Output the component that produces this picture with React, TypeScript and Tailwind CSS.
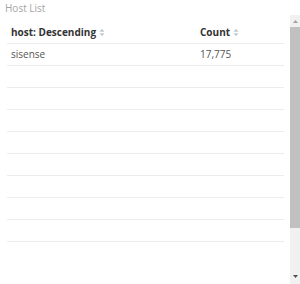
import React from "react";

const rows: { host: string; count: string }[] = [
  { host: "sisense", count: "17,775" },
  { host: "", count: "" },
  { host: "", count: "" },
  { host: "", count: "" },
  { host: "", count: "" },
  { host: "", count: "" },
  { host: "", count: "" },
  { host: "", count: "" },
  { host: "", count: "" },
];

function SortIcon() {
  return (
    <svg width="6" height="9" viewBox="0 0 6 9" className="ml-[3px] shrink-0">
      <path d="M0.5 3.8 L3 0.8 L5.5 3.8 Z" fill="#c3c7cc" />
      <path d="M0.5 5.2 L3 8.2 L5.5 5.2 Z" fill="#c3c7cc" />
    </svg>
  );
}

function Scrollbar() {
  return (
    <div className="w-[10px] h-full bg-[#f1f1f1] flex flex-col">
      <div className="h-[12px] flex items-center justify-center">
        <svg width="5" height="3" viewBox="0 0 5 3">
          <path d="M0 3 L2.5 0 L5 3 Z" fill="#a3a3a3" />
        </svg>
      </div>
      <div className="h-[201px] bg-[#c1c1c1]" />
      <div className="flex-1" />
      <div className="h-[12px] flex items-center justify-center mb-[2px]">
        <svg width="5" height="3" viewBox="0 0 5 3">
          <path d="M0 0 L2.5 3 L5 0 Z" fill="#505050" />
        </svg>
      </div>
    </div>
  );
}

export default function App() {
  return (
    <div
      className="w-[300px] h-[284px] bg-white flex flex-col overflow-hidden"
      style={{ fontFamily: '"Open Sans", "Liberation Sans", sans-serif' }}
    >
      <div className="h-[15px] pl-[5px] pt-[1px] text-[10px] leading-[14px] text-[#a5a5a5]">
        Host List
      </div>
      <div className="flex flex-1 min-h-0">
        <div className="flex-1 pl-[7px] pr-[6px] pt-[7px]">
          <div className="flex h-[22px] items-center border-b border-[#ececec] text-[10px] font-bold text-[#333]">
            <div className="w-[189px] pl-[4px] flex items-center">
              host: Descending
              <SortIcon />
            </div>
            <div className="flex-1 pl-[4px] flex items-center">
              Count
              <SortIcon />
            </div>
          </div>
          {rows.map((r, i) => (
            <div
              key={i}
              className="flex h-[22px] items-center border-b border-[#ececec] text-[10px] text-[#555]"
            >
              <div className="w-[189px] pl-[4px]">{r.host}</div>
              <div className="flex-1 pl-[4px]">{r.count}</div>
            </div>
          ))}
        </div>
        <Scrollbar />
      </div>
    </div>
  );
}
